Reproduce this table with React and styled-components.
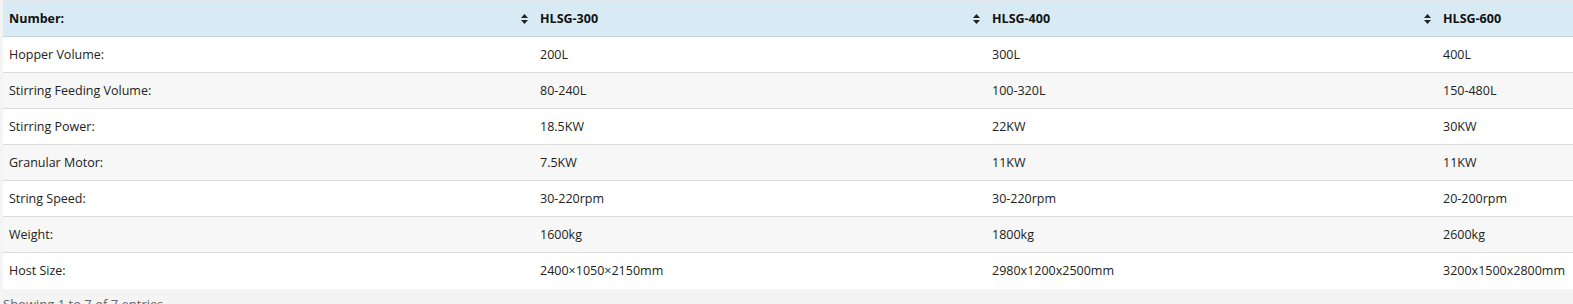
import React from 'react';
import styled, { createGlobalStyle } from 'styled-components';

const GlobalStyle = createGlobalStyle`
    * {
        margin: 0;
        padding: 0;
        box-sizing: border-box;
    }

    body {
        background: #f4f4f4;
        font-family: 'Open Sans', 'Liberation Sans', sans-serif;
        overflow: hidden;
    }
`;

const Wrapper = styled.div`
    padding: 0 0 0 3px;
    width: 1890px;
`;

const Table = styled.table`
    width: 1885px;
    border-collapse: collapse;
    table-layout: fixed;
    background: #fff;
    border-top: 1px solid #e4e8ea;
`;

const Head = styled.th`
    width: ${(props) => props.width}px;
    height: 36px;
    background: #d8ebf5;
    border-bottom: 1px solid #c9d3d8;
    padding: 0 6px;
    text-align: left;
    font-size: 12.5px;
    font-weight: 700;
    color: #111;
`;

const HeadInner = styled.div`
    display: flex;
    align-items: center;
    justify-content: space-between;
`;

const SortIcon = () => (
    <svg width="7" height="10" viewBox="0 0 7 10">
        <path d="M3.5 0 L7 4 H0 Z" fill="#222" />
        <path d="M3.5 10 L7 6 H0 Z" fill="#222" />
    </svg>
);

const Row = styled.tr`
    background: ${(props) => (props.odd ? '#f7f7f7' : '#fff')};
`;

const Cell = styled.td`
    height: 36px;
    padding: 0 6px;
    border-top: 1px solid #dcdcdc;
    font-size: 12.5px;
    color: #222;
    white-space: nowrap;
`;

const Info = styled.div`
    padding: 6px 0 0 0;
    font-size: 13px;
    color: #666;
`;

const heads = ['Number:', 'HLSG-300', 'HLSG-400', 'HLSG-600'];
const widths = [531, 452, 451, 451];

const rows = [
    ['Hopper Volume:', '200L', '300L', '400L'],
    ['Stirring Feeding Volume:', '80-240L', '100-320L', '150-480L'],
    ['Stirring Power:', '18.5KW', '22KW', '30KW'],
    ['Granular Motor:', '7.5KW', '11KW', '11KW'],
    ['String Speed:', '30-220rpm', '30-220rpm', '20-200rpm'],
    ['Weight:', '1600kg', '1800kg', '2600kg'],
    ['Host Size:', '2400×1050×2150mm', '2980x1200x2500mm', '3200x1500x2800mm'],
];

const App = () => {
    return (
        <Wrapper>
            <GlobalStyle />
            <Table>
                <thead>
                    <tr>
                        {heads.map((h, i) => (
                            <Head key={h} width={widths[i]}>
                                <HeadInner>
                                    <span>{h}</span>
                                    {i < 3 && <SortIcon />}
                                </HeadInner>
                            </Head>
                        ))}
                    </tr>
                </thead>
                <tbody>
                    {rows.map((r, i) => (
                        <Row key={r[0]} odd={i % 2 === 1}>
                            {r.map((c, j) => (
                                <Cell key={j}>{c}</Cell>
                            ))}
                        </Row>
                    ))}
                </tbody>
            </Table>
            <Info>Showing 1 to 7 of 7 entries</Info>
        </Wrapper>
    );
};

export default App;
